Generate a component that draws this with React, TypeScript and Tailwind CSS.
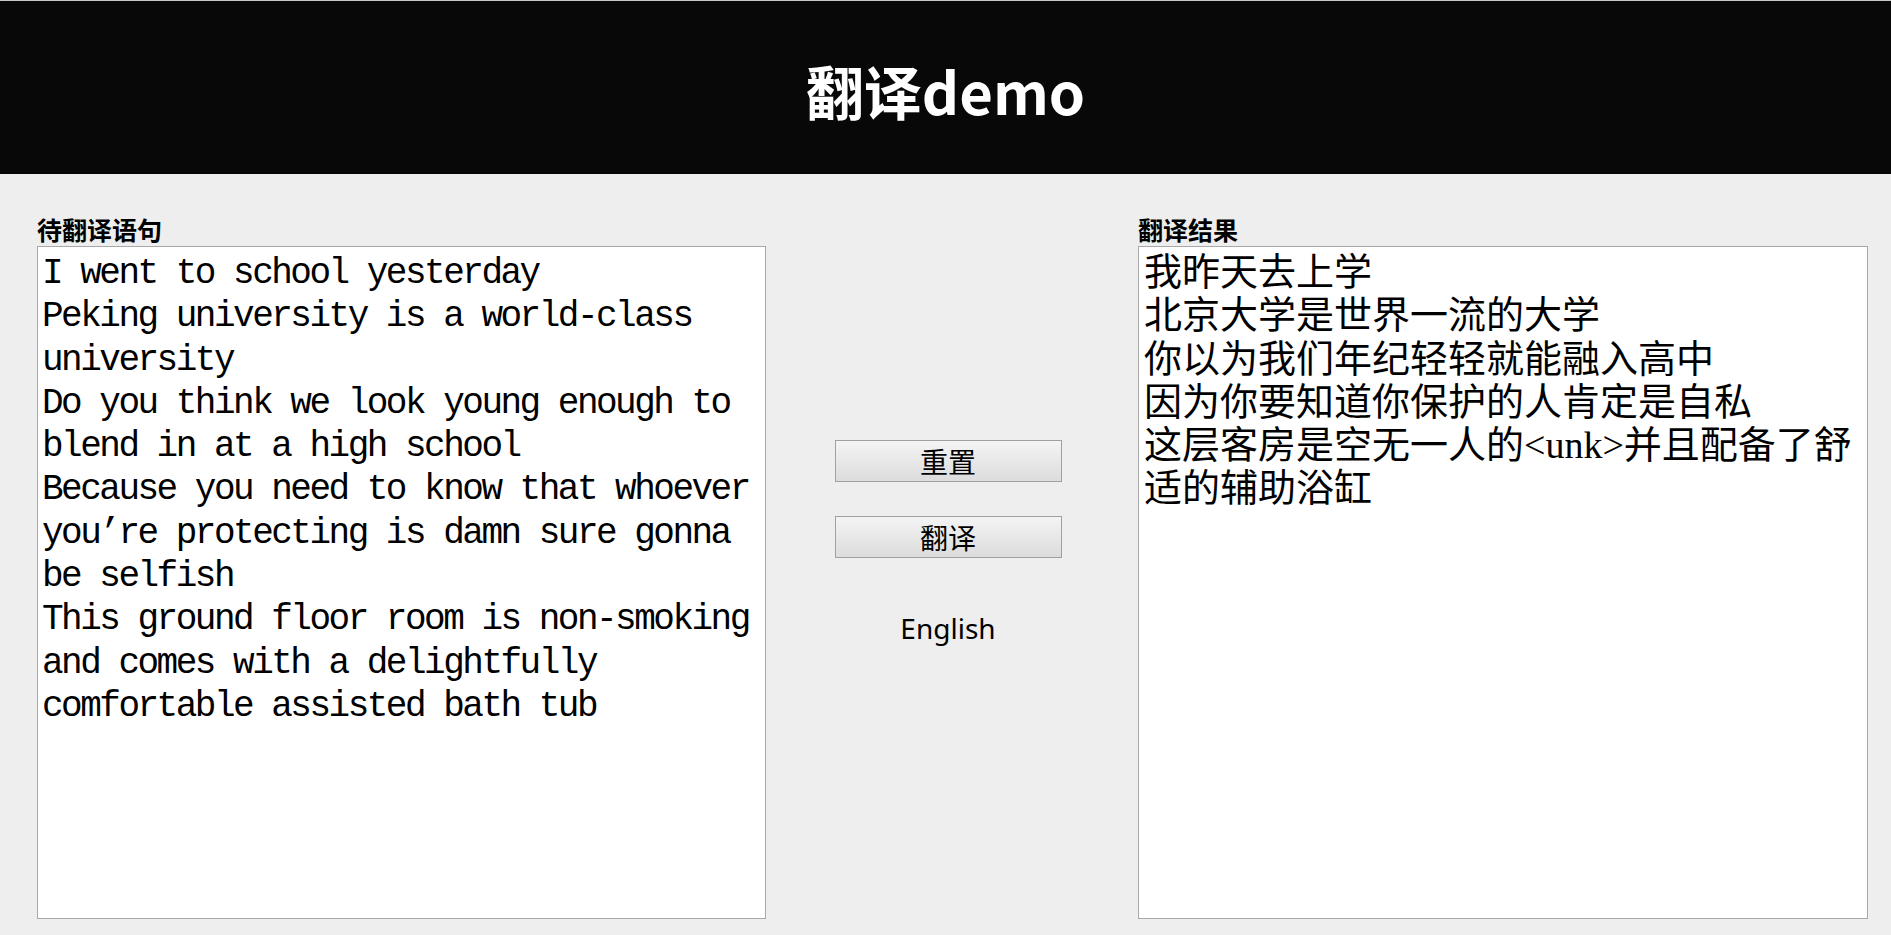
import React, { useState } from 'react';

const SOURCE_TEXT = `I went to school yesterday
Peking university is a world-class university
Do you think we look young enough to blend in at a high school
Because you need to know that whoever you’re protecting is damn sure gonna be selfish
This ground floor room is non-smoking and comes with a delightfully comfortable assisted bath tub`;

const RESULT_TEXT = `我昨天去上学
北京大学是世界一流的大学
你以为我们年纪轻轻就能融入高中
因为你要知道你保护的人肯定是自私
这层客房是空无一人的<unk>并且配备了舒适的辅助浴缸`;

const cjk = { fontFamily: '"Noto Sans CJK SC", "Noto Sans", sans-serif' };

export default function App() {
  const [source, setSource] = useState(SOURCE_TEXT);
  const [result, setResult] = useState(RESULT_TEXT);

  return (
    <div className="min-h-screen bg-[#eeeeee] flex flex-col" style={cjk}>
      {/* Header */}
      <header className="h-[174px] border-t border-[#c8c8c8] bg-[#080808] flex items-center justify-center">
        <h1 className="text-[58px] font-bold text-white leading-none pt-[4px]">翻译demo</h1>
      </header>

      <main className="flex pl-[37px] pr-[23px] pt-[41px] pb-[16px]">
        {/* Source */}
        <div className="w-[729px] flex flex-col">
          <label className="text-[25px] font-bold text-black leading-[28px] mb-[3px]">待翻译语句</label>
          <textarea
            value={source}
            onChange={(e) => setSource(e.target.value)}
            spellCheck={false}
            className="h-[673px] w-full resize-none bg-white border border-[#a8a8a8] pl-[4px] pr-[4px] pt-[5px] text-black text-[36px] leading-[43.3px] tracking-[-2.5px] outline-none"
            style={{ fontFamily: '"Liberation Mono", "Noto Sans CJK SC", monospace' }}
          />
        </div>

        {/* Actions */}
        <div className="flex-1 flex flex-col items-center pt-[225px] pr-[8px]">
          <button
            onClick={() => { setSource(''); setResult(''); }}
            className="w-[227px] h-[42px] border border-[#a0a0a0] bg-gradient-to-b from-[#f4f4f4] to-[#dcdcdc] text-black text-[28px] leading-none"
          >
            重置
          </button>
          <button
            onClick={() => setResult(RESULT_TEXT)}
            className="mt-[34px] w-[227px] h-[42px] border border-[#a0a0a0] bg-gradient-to-b from-[#f4f4f4] to-[#dcdcdc] text-black text-[28px] leading-none"
          >
            翻译
          </button>
          <div
            className="mt-[52px] text-[28px] leading-[36px] text-black"
            style={{ fontFamily: '"Noto Sans", sans-serif' }}
          >
            English
          </div>
        </div>

        {/* Result */}
        <div className="w-[730px] flex flex-col">
          <label className="text-[25px] font-bold text-black leading-[28px] mb-[3px]">翻译结果</label>
          <textarea
            value={result}
            onChange={(e) => setResult(e.target.value)}
            spellCheck={false}
            className="h-[673px] w-full resize-none bg-white border border-[#a8a8a8] pl-[5px] pr-[2px] pt-[4px] text-black text-[38px] leading-[43.3px] outline-none"
            style={{ fontFamily: '"Liberation Serif", "Noto Sans CJK SC", serif' }}
          />
        </div>
      </main>
    </div>
  );
}
